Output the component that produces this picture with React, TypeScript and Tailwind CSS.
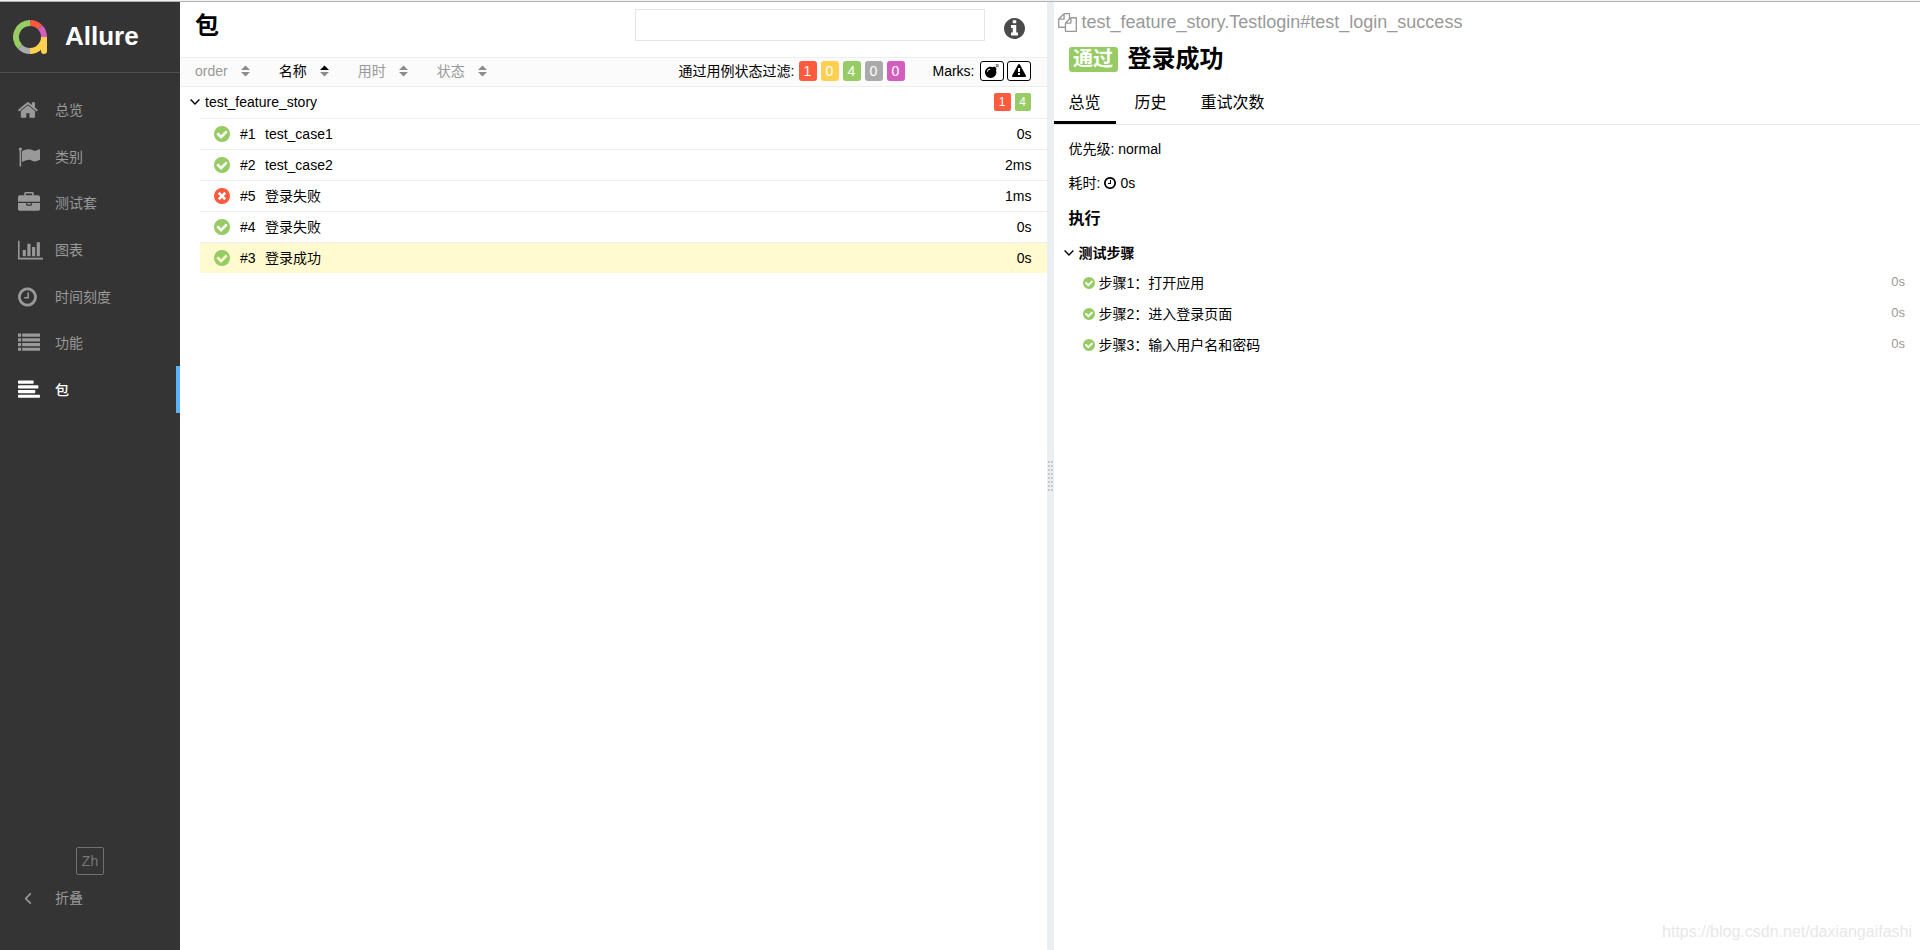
import React, { useState } from 'react';
import { FaBomb } from 'react-icons/fa';

const CIRCLE =
  'm0 0q0 209-103 385.5t-279.5 279.5-385.5 103-385.5-103-279.5-279.5-103-385.5 103-385.5 279.5-279.5 385.5-103 385.5 103 279.5 279.5 103 385.5z';

const PATHS = {
  home: 'M1472 992v480q0 26-19 45t-45 19h-384v-384h-256v384h-384q-26 0-45-19t-19-45v-480q0-1 .5-3t.5-3l575-474 575 474q1 2 1 6zm223-69l-62 74q-8 9-21 11h-3q-13 0-21-7l-692-577-692 577q-12 8-24 7-13-2-21-11l-62-74q-8-10-7-23.5t11-21.5l719-599q32-26 76-26t76 26l244 204v-195q0-14 9-23t23-9h192q14 0 23 9t9 23v408l219 182q10 8 11 21.5t-7 23.5z',
  flag: 'M320 256q0 72-64 110v1266q0 13-9.5 22.5t-22.5 9.5h-64q-13 0-22.5-9.5t-9.5-22.5v-1266q-64-38-64-110 0-53 37.5-90.5t90.5-37.5 90.5 37.5 37.5 90.5zm1472 64v763q0 25-12.5 38.5t-39.5 27.5q-215 116-369 116-61 0-123.5-22t-108.5-48-115.5-48-142.5-22q-192 0-464 146-17 9-33 9-26 0-45-19t-19-45v-742q0-32 31-55 21-14 79-43 236-120 421-120 107 0 200 29t219 88q38 19 88 19 54 0 117.5-21t110-47 88-47 54.5-21q26 0 45 19t19 45z',
  briefcase: 'M640 256h512v-128h-512v128zm1152 640v480q0 66-47 113t-113 47h-1472q-66 0-113-47t-47-113v-480h672v160q0 26 19 45t45 19h320q26 0 45-19t19-45v-160h672zm-768 0v128h-256v-128h256zm768-480v384h-1792v-384q0-66 47-113t113-47h352v-160q0-40 28-68t68-28h576q40 0 68 28t28 68v160h352q66 0 113 47t47 113z',
  chart: 'M640 896v512h-256v-512h256zm384-512v1024h-256v-1024h256zm1024 1152v128h-2048v-1536h128v1408h1920zm-640-896v768h-256v-768h256zm384-384v1152h-256v-1152h256z',
  clock: 'M1024 544v448q0 14-9 23t-23 9h-320q-14 0-23-9t-9-23v-64q0-14 9-23t23-9h224v-352q0-14 9-23t23-9h64q14 0 23 9t9 23zm416 352q0-148-73-273t-198-198-273-73-273 73-198 198-73 273 73 273 198 198 273 73 273-73 198-198 73-273zM1664 896' + CIRCLE,
  list: 'M0 1280h256v256h-256zM0 896h256v256h-256zM0 512h256v256h-256zM0 128h256v256h-256zM340 1280h1452v256h-1452zM340 896h1452v256h-1452zM340 512h1452v256h-1452zM340 128h1452v256h-1452z',
  align: 'M64 1280h1664q64 0 64 64v128q0 64-64 64h-1664q-64 0-64-64v-128q0-64 64-64zM64 896h1280q64 0 64 64v128q0 64-64 64h-1280q-64 0-64-64v-128q0-64 64-64zM64 512h1536q64 0 64 64v128q0 64-64 64h-1536q-64 0-64-64v-128q0-64 64-64zM64 128h1152q64 0 64 64v128q0 64-64 64h-1152q-64 0-64-64v-128q0-64 64-64z',
  check: 'M1412 734q0-28-18-46l-91-90q-19-19-45-19t-45 19l-408 407-226-226q-19-19-45-19t-45 19l-91 90q-18 18-18 46 0 27 18 45l362 362q19 19 45 19 27 0 46-19l543-543q18-18 18-45zM1664 896' + CIRCLE,
  times: 'M1277 1122q0-26-19-45l-181-181 181-181q19-19 19-45 0-27-19-46l-90-90q-19-18-46-18-26 0-45 19l-181 181-181-181q-19-19-45-19-27 0-46 19l-90 90q-19 19-19 46 0 26 19 45l181 181-181 181q-19 19-19 45 0 27 19 46l90 90q19 19 46 19 26 0 45-19l181-181 181 181q19 19 45 19 27 0 46-19l90-90q19-19 19-46zM1664 896' + CIRCLE,
  info: 'M1152 1376v-160q0-14-9-23t-23-9h-96v-512q0-14-9-23t-23-9h-320q-14 0-23 9t-9 23v160q0 14 9 23t23 9h96v320h-96q-14 0-23 9t-9 23v160q0 14 9 23t23 9h448q14 0 23-9t9-23zm-128-896v-160q0-14-9-23t-23-9h-192q-14 0-23 9t-9 23v160q0 14 9 23t23 9h192q14 0 23-9t9-23zM1664 896' + CIRCLE,
  warning: 'M1024 1375v-190q0-14-9.5-23.5t-22.5-9.5h-192q-13 0-22.5 9.5t-9.5 23.5v190q0 14 9.5 23.5t22.5 9.5h192q13 0 22.5-9.5t9.5-23.5zm-2-374l18-459q0-12-10-19-13-11-24-11h-220q-11 0-24 11-10 7-10 21l17 457q0 10 10 16.5t24 6.5h185q14 0 23.5-6.5t10.5-16.5zm-14-934l768 1408q35 63-2 126-17 29-46.5 46t-63.5 17h-1536q-34 0-63.5-17t-46.5-46q-37-63-2-126l768-1408q17-31 47-49t65-18 65 18 47 49z',
  files: 'M1696 384q40 0 68 28t28 68v1216q0 40-28 68t-68 28h-960q-40 0-68-28t-28-68v-288h-544q-40 0-68-28t-28-68v-672q0-40 20-88t48-76l408-408q28-28 76-48t88-20h416q40 0 68 28t28 68v328q68-40 128-40h416zm-544 213l-299 299h299v-299zm-640-384l-299 299h299v-299zm196 647l316-316v-416h-384v416q0 40-28 68t-68 28h-416v640h512v-256q0-40 20-88t48-76zm956 804v-1152h-384v416q0 40-28 68t-68 28h-416v640h896z',
};

type IconName = keyof typeof PATHS;

interface IconProps {
  name: IconName;
  viewBox?: string;
  className?: string;
}

const Icon: React.FC<IconProps> = ({ name, viewBox = '0 0 1792 1792', className }) => (
  <svg viewBox={viewBox} className={className} fill="currentColor" fillRule="evenodd" aria-hidden="true">
    <path d={PATHS[name]} />
  </svg>
);

// round icons without the side bearings of the 1792 grid
const ROUND = '128 128 1536 1536';

const Chevron: React.FC<{ className?: string }> = ({ className }) => (
  <svg viewBox="0 0 10 6" className={className} fill="none" stroke="currentColor" strokeWidth="1.4" aria-hidden="true">
    <path d="M0.6 0.6 5 5l4.400-4.400" />
  </svg>
);

const Logo = () => (
  <svg viewBox="0 0 34 34" className="size-[34px]" fill="none" strokeWidth="6" aria-hidden="true">
    <path d="M7.100 26.900A14 14 0 0 1 17 3" stroke="#97cc64" />
    <path d="M17 31A14 14 0 0 1 7.100 26.900" stroke="#aaaaaa" />
    <path d="M17 3A14 14 0 0 1 26.900 7.100" stroke="#fd5a3e" />
    <path d="M26.900 7.100A14 14 0 0 1 31 17" stroke="#d35ebe" />
    <path d="M31 17A14 14 0 0 1 17 31" stroke="#ffd050" />
    <path d="M28 17h6v14a3 3 0 0 1-6 0z" fill="#ffd050" stroke="none" />
  </svg>
);

interface NavItem {
  label: string;
  icon: IconName;
  viewBox: string;
  size: string;
}

const nav: NavItem[] = [
  { label: '总览', icon: 'home', viewBox: '90 0 1792 1792', size: 'size-[22px]' },
  { label: '类别', icon: 'flag', viewBox: '0 0 1792 1792', size: 'size-[22px]' },
  { label: '测试套', icon: 'briefcase', viewBox: '0 0 1792 1792', size: 'size-[22px]' },
  { label: '图表', icon: 'chart', viewBox: '0 0 2048 1792', size: 'h-[22px] w-[25px]' },
  { label: '时间刻度', icon: 'clock', viewBox: '128 0 1792 1792', size: 'size-[22px]' },
  { label: '功能', icon: 'list', viewBox: '0 0 1792 1792', size: 'size-[22px]' },
  { label: '包', icon: 'align', viewBox: '0 0 1792 1792', size: 'size-[22px]' },
];

const Sidebar = () => (
  <aside className="flex w-[180px] shrink-0 flex-col bg-[#343434] text-[#999]">
    <a href="#" className="flex h-[71px] items-center gap-[18px] border-b border-[#4f4f4f] pl-[13px] text-[26px] font-bold text-white">
      <Logo />
      Allure
    </a>
    <nav className="mt-[14px] grid h-[326px] grid-rows-7">
      {nav.map(item => (
        <a
          key={item.label}
          href="#"
          className={
            item.label === '包'
              ? 'flex items-center border-r-4 border-[#5eb1f7] pl-[18px] font-medium text-white'
              : 'flex items-center pl-[18px]'
          }
        >
          <span className="w-[37px]">
            <Icon name={item.icon} viewBox={item.viewBox} className={item.size} />
          </span>
          {item.label}
        </a>
      ))}
    </nav>
    <div className="mt-auto flex flex-col pb-[40px]">
      <button className="size-7 self-center rounded-[2px] border border-[#707070] text-[#777]">Zh</button>
      <button className="mt-[11px] flex h-6 items-center pl-[22px]">
        <span className="w-[33px]">
          <Chevron className="h-[7px] w-3 rotate-90" />
        </span>
        折叠
      </button>
    </div>
  </aside>
);

const sorters = ['order', '名称', '用时', '状态'];

const Sorter: React.FC<{ label: string; active: boolean; onClick: () => void }> = ({ label, active, onClick }) => (
  <button onClick={onClick} className={`flex items-center gap-[13px] ${active ? 'text-black' : 'text-[#999]'}`}>
    {label}
    <svg viewBox="0 0 9 12" className="h-3 w-[9px]" aria-hidden="true">
      <path d="M0 5 4.500 0.500 9 5z" fill={active ? '#000' : '#8c8c8c'} />
      <path d="M0 7h9L4.500 11.500z" fill="#8c8c8c" />
    </svg>
  </button>
);

const filters = [
  { name: 'failed', count: 1, color: 'bg-[#fd5a3e]' },
  { name: 'broken', count: 0, color: 'bg-[#ffd050]' },
  { name: 'passed', count: 4, color: 'bg-[#97cc64]' },
  { name: 'skipped', count: 0, color: 'bg-[#aaaaaa]' },
  { name: 'unknown', count: 0, color: 'bg-[#d35ebe]' },
];

const cases = [
  { order: 1, name: 'test_case1', passed: true, time: '0s' },
  { order: 2, name: 'test_case2', passed: true, time: '2ms' },
  { order: 5, name: '登录失败', passed: false, time: '1ms' },
  { order: 4, name: '登录失败', passed: true, time: '0s' },
  { order: 3, name: '登录成功', passed: true, time: '0s' },
];

const TreePanel = () => {
  const [sort, setSort] = useState('名称');
  const [selected, setSelected] = useState(3);

  return (
    <section className="min-w-0 flex-1">
      <div className="flex h-[55px] items-start pl-[15px] pr-[22px] pt-[7px]">
        <h1 className="text-2xl leading-[34px] font-bold">包</h1>
        <input type="search" aria-label="search" className="ml-auto h-8 w-[350px] border border-[#e5e5e5] px-2 outline-none" />
        <button aria-label="info" className="mt-[9px] ml-[19px] text-[#4a4a4a]">
          <Icon name="info" viewBox={ROUND} className="size-[21px]" />
        </button>
      </div>
      <div className="flex h-[30px] items-center border-y border-[#eceff1] bg-[#fbfbfb] px-4 pb-[2px] pl-[15px]">
        <div className="flex gap-[29px]">
          {sorters.map(label => (
            <Sorter key={label} label={label} active={label === sort} onClick={() => setSort(label)} />
          ))}
        </div>
        <div className="ml-auto flex items-center gap-1">
          <span>通过用例状态过滤:</span>
          {filters.map(f => (
            <button key={f.name} aria-label={f.name} className={`h-5 w-[18px] rounded-[3px] text-white ${f.color}`}>
              {f.count}
            </button>
          ))}
        </div>
        <div className="ml-7 flex items-center gap-[3px]">
          <span className="mr-[2px]">Marks:</span>
          <button aria-label="flaky" className="flex h-5 w-6 items-center justify-center rounded-[3px] border border-black bg-white">
            <FaBomb className="size-[14px]" />
          </button>
          <button aria-label="new failed" className="flex h-5 w-6 items-center justify-center rounded-[3px] border border-black bg-white">
            <Icon name="warning" className="size-[14px]" />
          </button>
        </div>
      </div>
      <button className="flex h-[31px] w-full items-center gap-[5px] pb-px pl-[10px] pr-4">
        <Chevron className="h-[6px] w-[10px]" />
        <span>test_feature_story</span>
        <span className="ml-auto flex gap-1 text-xs leading-[18px] text-white">
          <span className="w-[17px] rounded-[2px] bg-[#fd5a3e]">1</span>
          <span className="w-[16px] rounded-[2px] bg-[#97cc64]">4</span>
        </span>
      </button>
      <div className="pl-5">
        {cases.map(c => (
          <a
            key={c.order}
            href="#"
            onClick={() => setSelected(c.order)}
            className={`flex h-[31px] items-center border-t border-[#eceff1] pl-[14px] pr-[15px] ${c.order === selected ? 'bg-[#fffacf]' : ''}`}
          >
            <Icon
              name={c.passed ? 'check' : 'times'}
              viewBox={ROUND}
              className={c.passed ? 'size-4 text-[#97cc64]' : 'size-4 text-[#fd5a3e]'}
            />
            <span className="ml-[10px] w-[25px]">#{c.order}</span>
            <span>{c.name}</span>
            <span className="ml-auto">{c.time}</span>
          </a>
        ))}
      </div>
    </section>
  );
};

const Gutter = () => (
  <div className="flex w-[7px] shrink-0 items-center justify-center bg-[#eceff1]">
    <div className="grid grid-cols-2 gap-x-px gap-y-[2px]">
      {Array.from({ length: 16 }, (_, i) => (
        <span key={i} className="size-[2px] bg-[#c8c8c8]" />
      ))}
    </div>
  </div>
);

const tabs = ['总览', '历史', '重试次数'];
const steps = ['步骤1：打开应用', '步骤2：进入登录页面', '步骤3：输入用户名和密码'];

const DetailPanel = () => {
  const [tab, setTab] = useState('总览');

  return (
    <section className="min-w-0 flex-1">
      <div className="flex items-center gap-[5px] pl-1 pt-2 text-lg leading-6 text-[#999]">
        <Icon name="files" className="size-[19px]" />
        test_feature_story.Testlogin#test_login_success
      </div>
      <h2 className="flex items-center gap-[10px] px-[15px] pt-[9px] text-2xl leading-8 font-bold">
        <span className="w-[49px] rounded-[3px] bg-[#97cc64] text-center text-xl leading-[25px] text-white">通过</span>
        登录成功
      </h2>
      <div className="mt-[9px] flex gap-1 border-b border-[#e5e5e5]">
        {tabs.map(t => (
          <button
            key={t}
            onClick={() => setTab(t)}
            className={`h-[40px] border-b-[3px] px-[15px] pt-px text-base ${t === tab ? 'border-black' : 'border-transparent'}`}
          >
            {t}
          </button>
        ))}
      </div>
      <div className="px-[15px] leading-[20px]">
        <p className="mt-[14px]">优先级: normal</p>
        <p className="mt-[14px] flex items-center gap-1">
          耗时: <Icon name="clock" viewBox={ROUND} className="size-3" /> 0s
        </p>
        <h3 className="mt-4 text-base leading-[20px] font-bold">执行</h3>
      </div>
      <button className="mt-[14px] flex h-5 items-center gap-[5px] pl-[10px] font-bold">
        <Chevron className="h-[6px] w-[10px]" />
        测试步骤
      </button>
      <ul className="mt-1 pl-[29px] pr-[15px]">
        {steps.map(step => (
          <li key={step} className="flex h-[31px] items-center gap-1">
            <Icon name="check" viewBox={ROUND} className="size-3 text-[#97cc64]" />
            {step}
            <span className="ml-auto text-[13px] text-[#999]">0s</span>
          </li>
        ))}
      </ul>
    </section>
  );
};

export default function App() {
  return (
    <div className="flex h-screen flex-col bg-white font-['Liberation_Sans','Noto_Sans_CJK_SC',sans-serif] text-sm text-black">
      <div className="h-[2px] shrink-0 border-b border-[#b2b2b2] bg-[#f1f1f1]" />
      <div className="relative flex min-h-0 flex-1">
        <Sidebar />
        <TreePanel />
        <Gutter />
        <DetailPanel />
        <span className="absolute right-2 bottom-[6px] text-base text-[#e8e8e8]">https://blog.csdn.net/daxiangaifashi</span>
      </div>
    </div>
  );
}
